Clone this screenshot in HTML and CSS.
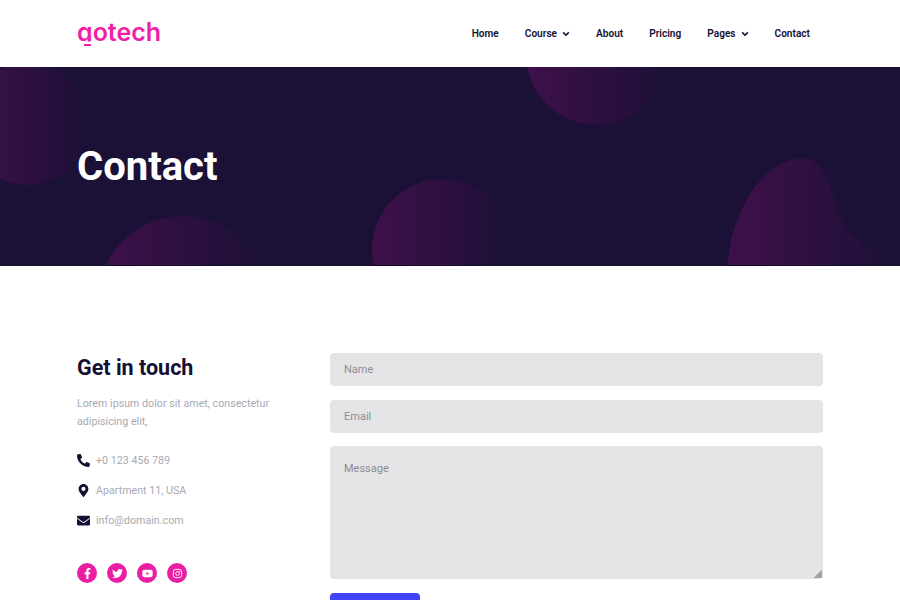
FILE: index.html
```html
<!DOCTYPE html>
<html lang="en">
<head>
    <meta charset="UTF-8">
    <meta name="viewport" content="width=device-width, initial-scale=1.0">
    <title>Gotech - Contact</title>
    <link rel="stylesheet" href="styles.css">
</head>
<body>
    <header class="site-header">
        <a class="logo" href="#"><span class="logo-g">g</span>otech</a>
        <nav class="main-nav">
            <a href="#">Home</a>
            <a href="#">Course
                <svg class="chevron" viewBox="0 0 10 10"><path d="M1.500 3l3.500 3.500L8.500 3" fill="none" stroke="currentColor" stroke-width="2"/></svg>
            </a>
            <a href="#">About</a>
            <a href="#">Pricing</a>
            <a href="#">Pages
                <svg class="chevron" viewBox="0 0 10 10"><path d="M1.500 3l3.500 3.500L8.500 3" fill="none" stroke="currentColor" stroke-width="2"/></svg>
            </a>
            <a href="#">Contact</a>
        </nav>
    </header>

    <section class="hero">
        <svg class="hero-shapes" viewBox="0 0 900 198" aria-hidden="true">
            <defs>
                <linearGradient id="blob">
                    <stop offset="0" stop-color="#3f104b"/>
                    <stop offset="1" stop-color="#1b1035"/>
                </linearGradient>
            </defs>
            <circle cx="27" cy="57" r="61" fill="url(#blob)"/>
            <circle cx="183" cy="234" r="85" fill="url(#blob)"/>
            <circle cx="443" cy="183" r="71" fill="url(#blob)"/>
            <circle cx="597" cy="-13" r="71" fill="url(#blob)"/>
            <path d="M728 198C730 150 760 93 803 91C822 91 830 115 836 140C845 170 870 185 900 192V198Z" fill="url(#blob)"/>
        </svg>
        <h1>Contact</h1>
    </section>

    <main class="contact">
        <div class="contact-info">
            <h2>Get in touch</h2>
            <p>Lorem ipsum dolor sit amet, consectetur adipisicing elit,</p>
            <ul class="info-list">
                <li>
                    <svg viewBox="0 0 512 512"><path d="M497.39 361.8l-112-48a24 24 0 0 0-28 6.9l-49.6 60.6A370.66 370.66 0 0 1 130.6 204.11l60.6-49.6a23.94 23.94 0 0 0 6.9-28l-48-112A24.16 24.16 0 0 0 122.6.61l-104 24A24 24 0 0 0 0 48c0 256.5 207.9 464 464 464a24 24 0 0 0 23.4-18.6l24-104a24.29 24.29 0 0 0-14.01-27.6z"/></svg>
                    <span>+0 123 456 789</span>
                </li>
                <li>
                    <svg viewBox="0 0 512 512"><path transform="translate(64)" d="M172.268 501.67C26.97 291.031 0 268.413 0 192 0 85.961 85.961 0 192 0s192 85.961 192 192c0 76.413-26.97 99.031-172.268 309.67-9.535 13.774-29.93 13.773-39.464 0zM192 272c44.183 0 80-35.817 80-80s-35.817-80-80-80-80 35.817-80 80 35.817 80 80 80z"/></svg>
                    <span>Apartment 11, USA</span>
                </li>
                <li>
                    <svg viewBox="0 0 512 512"><path d="M502.3 190.8c3.9-3.1 9.7-.2 9.7 4.7V400c0 26.5-21.5 48-48 48H48c-26.5 0-48-21.5-48-48V195.6c0-5 5.7-7.8 9.7-4.7 22.4 17.4 52.1 39.5 154.1 113.6 21.1 15.4 56.7 47.8 92.2 47.6 35.7.3 72-32.8 92.3-47.6 102-74.1 131.6-96.3 154-113.7zM256 320c23.2.4 56.6-29.2 73.4-41.4 132.7-96.3 142.8-104.7 173.4-128.7 5.8-4.5 9.2-11.5 9.2-18.9v-19c0-26.5-21.5-48-48-48H48C21.5 64 0 85.5 0 112v19c0 7.4 3.4 14.3 9.2 18.9 30.6 23.9 40.7 32.4 173.4 128.7 16.8 12.2 50.2 41.8 73.4 41.4z"/></svg>
                    <span>info@domain.com</span>
                </li>
            </ul>
            <div class="socials">
                <a href="#"><svg viewBox="0 0 320 512"><path d="M279.14 288l14.22-92.66h-88.91v-60.13c0-25.35 12.42-50.06 52.24-50.06h40.42V6.26S260.43 0 225.36 0c-73.22 0-121.08 44.38-121.08 124.72v70.62H22.89V288h81.39v224h100.17V288z"/></svg></a>
                <a href="#"><svg viewBox="0 0 512 512"><path d="M459.37 151.716c.325 4.548.325 9.097.325 13.645 0 138.72-105.583 298.558-298.558 298.558-59.452 0-114.68-17.219-161.137-47.106 8.447.974 16.568 1.299 25.34 1.299 49.055 0 94.213-16.568 130.274-44.832-46.132-.975-84.792-31.188-98.112-72.772 6.498.974 12.995 1.624 19.818 1.624 9.421 0 18.843-1.3 27.614-3.573-48.081-9.747-84.143-51.98-84.143-102.985v-1.299c13.969 7.797 30.214 12.67 47.431 13.319-28.264-18.843-46.781-51.005-46.781-87.391 0-19.492 5.197-37.36 14.294-52.954 51.655 63.675 129.3 105.258 216.365 109.807-1.624-7.797-2.599-15.918-2.599-24.04 0-57.828 46.782-104.934 104.934-104.934 30.213 0 57.502 12.67 76.67 33.137 23.715-4.548 46.456-13.32 66.599-25.34-7.798 24.366-24.366 44.833-46.132 57.827 21.117-2.273 41.584-8.122 60.426-16.243-14.292 20.791-32.161 39.308-52.628 54.253z"/></svg></a>
                <a href="#"><svg viewBox="0 0 576 512"><path d="M549.655 124.083c-6.281-23.65-24.787-42.276-48.284-48.597C458.781 64 288 64 288 64S117.22 64 74.629 75.486c-23.497 6.322-42.003 24.947-48.284 48.597-11.412 42.867-11.412 132.305-11.412 132.305s0 89.438 11.412 132.305c6.281 23.65 24.787 41.5 48.284 47.821C117.22 448 288 448 288 448s170.78 0 213.371-11.486c23.497-6.321 42.003-24.171 48.284-47.821 11.412-42.867 11.412-132.305 11.412-132.305s0-89.438-11.412-132.305zm-317.51 213.508V175.185l142.739 81.205-142.739 81.201z"/></svg></a>
                <a href="#"><svg viewBox="0 0 24 24"><rect x="3" y="3" width="18" height="18" rx="5" fill="none" stroke="#fff" stroke-width="2"/><circle cx="12" cy="12" r="4" fill="none" stroke="#fff" stroke-width="2"/><circle cx="17" cy="7" r="1.3"/></svg></a>
            </div>
        </div>

        <form class="contact-form">
            <input type="text" placeholder="Name">
            <input type="email" placeholder="Email">
            <textarea placeholder="Message"></textarea>
            <button type="button" aria-label="Send"></button>
        </form>
    </main>
</body>
</html>
```

FILE: styles.css
```css
* {
    box-sizing: border-box;
}

body {
    font-family: Roboto, 'Liberation Sans', sans-serif;
    margin: 0;
    padding: 0;
    background: #fff;
    color: #150f33;
}

a {
    color: inherit;
    text-decoration: none;
}

.site-header {
    height: 67px;
    padding: 0 90px 0 77px;
    display: flex;
    align-items: center;
    justify-content: space-between;
}

.logo {
    font-family: Inter, sans-serif;
    font-size: 25px;
    font-weight: 600;
    color: #f01fa8;
    line-height: 30px;
    position: relative;
    top: -2px;
}

/* the logo's g has a detached tail, so the real one is cut at the baseline */
.logo-g {
    display: inline-block;
    clip-path: inset(0 0 5px 0);
}

.logo::after {
    content: "";
    position: absolute;
    left: 7px;
    bottom: 1px;
    width: 7px;
    height: 2px;
    background: #f01fa8;
}

.main-nav {
    display: flex;
    gap: 26px;
    font-size: 10.12px;
    font-weight: 600;
}

.main-nav a {
    display: flex;
    align-items: center;
    gap: 5px;
}

.chevron {
    width: 8px;
    height: 8px;
}

.hero {
    position: relative;
    height: 199px;
    padding: 0 77px;
    display: flex;
    align-items: center;
    background: #1b1035;
    border-bottom: 1px solid #121026;
    overflow: hidden;
}

.hero-shapes {
    position: absolute;
    top: 0;
    left: 0;
    width: 900px;
    height: 198px;
}

.hero h1 {
    position: relative;
    margin: 0;
    font-size: 40px;
    font-weight: 700;
    color: #fff;
}

.contact {
    padding: 87px 77px 40px;
    display: grid;
    grid-template-columns: 253px 493px;
}

.contact-info h2 {
    margin: 0;
    font-size: 21.5px;
    line-height: 29px;
    font-weight: 700;
}

.contact-info p {
    margin: 13px 0 0;
    width: 210px;
    font-size: 10.7px;
    line-height: 18px;
    color: #a9a9b3;
}

.info-list {
    list-style: none;
    margin: 14px 0 0;
    padding: 0;
}

.info-list li {
    height: 30px;
    display: flex;
    align-items: center;
    gap: 6px;
    font-size: 10.7px;
    color: #a9a9b3;
}

.info-list svg {
    width: 13px;
    height: 13px;
    fill: #150f33;
}

.socials {
    margin-top: 28px;
    display: flex;
    gap: 10px;
}

.socials a {
    width: 20px;
    height: 20px;
    border-radius: 50%;
    background: #e91ea3;
    display: flex;
    align-items: center;
    justify-content: center;
}

.socials svg {
    width: 11px;
    height: 11px;
    fill: #fff;
}

.contact-form {
    display: flex;
    flex-direction: column;
    align-items: flex-start;
    gap: 13.25px;
}

.contact-form input,
.contact-form textarea {
    width: 100%;
    border: 0;
    border-radius: 4px;
    background: #e4e4e6;
    padding: 0 14px;
    font-family: inherit;
    font-size: 11px;
    color: #150f33;
}

.contact-form input {
    height: 33.25px;
}

.contact-form textarea {
    height: 133px;
    margin-bottom: 0.75px;
    padding-top: 16px;
    display: block;
}

.contact-form textarea::-webkit-resizer {
    background: linear-gradient(135deg, transparent 50%, #a3a3a6 50%) no-repeat right 1px bottom 1px / 8px 8px;
}

.contact-form ::placeholder {
    color: #8d8d91;
    opacity: 1;
}

.contact-form button {
    width: 90px;
    height: 33px;
    border: 0;
    border-radius: 4px;
    background: #4343fb;
}
```
